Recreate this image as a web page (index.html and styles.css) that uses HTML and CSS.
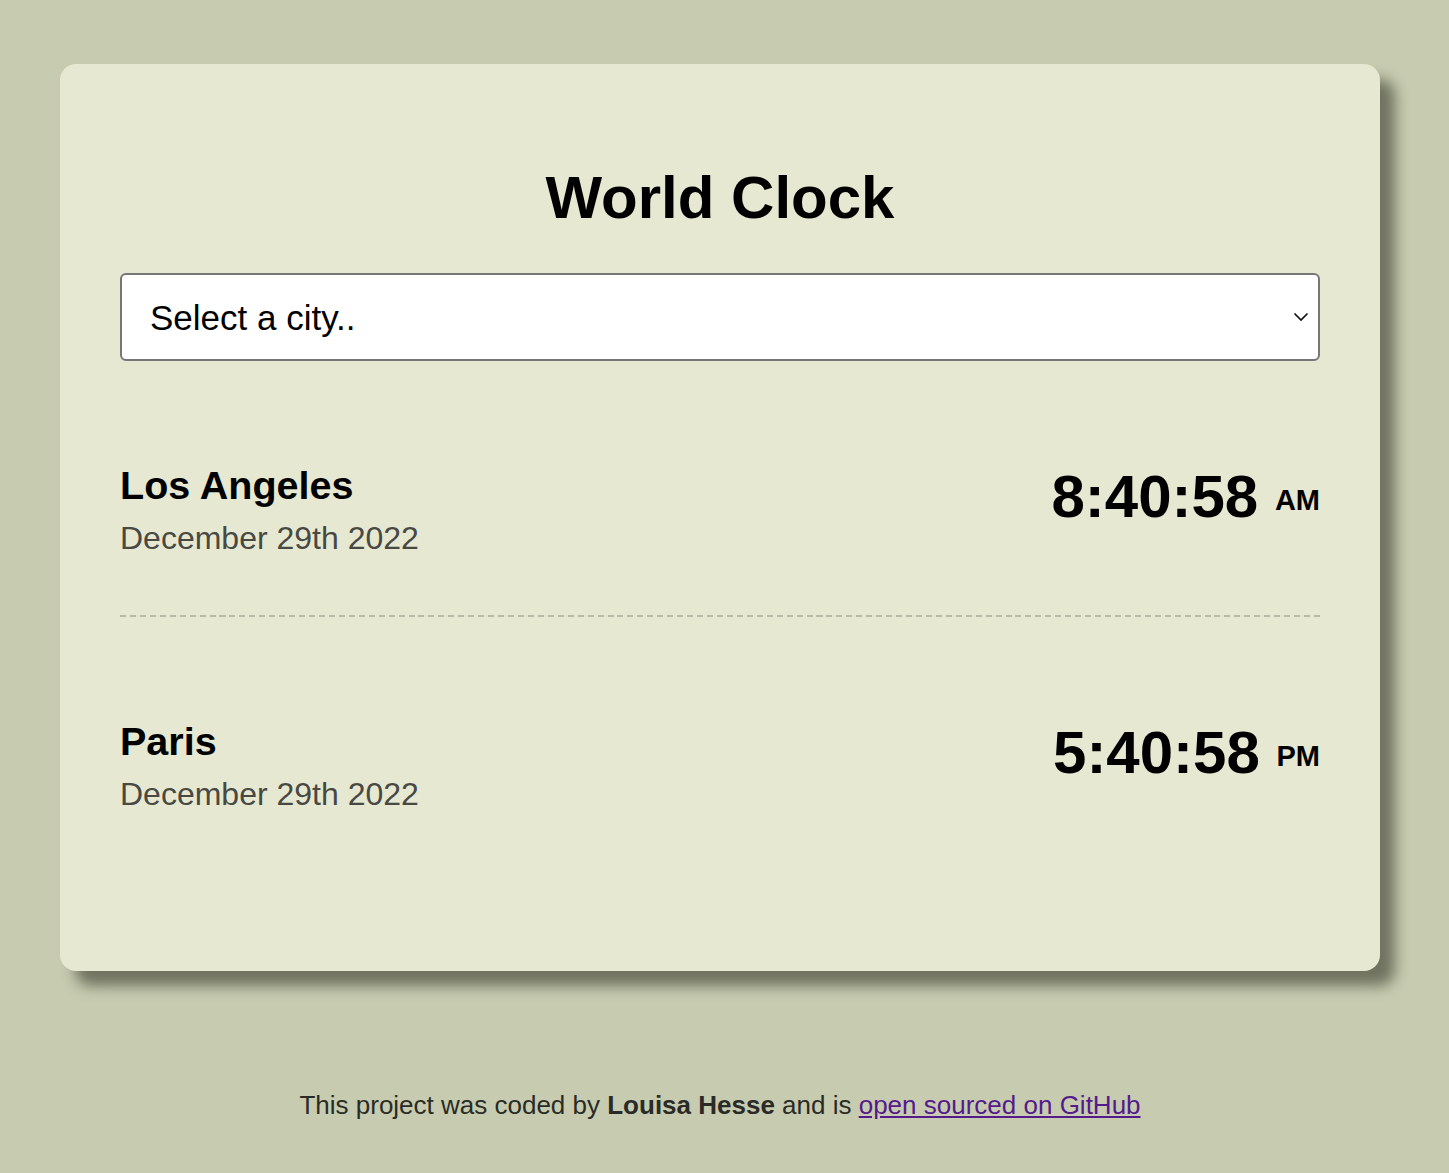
FILE: index.html
```html
<!DOCTYPE html>
<html lang="en">
<head>
<meta charset="utf-8">
<title>World Clock</title>
<link rel="stylesheet" href="styles.css">
</head>
<body>
<div class="container">
  <main class="card">
    <h1 class="title">World Clock</h1>
    <select class="city-select">
      <option>Select a city..</option>
    </select>
    <div class="cities">
      <div class="city">
        <div class="city-info">
          <h2 class="city-name">Los Angeles</h2>
          <div class="city-date">December 29th 2022</div>
        </div>
        <div class="city-time">8:40:58 <small class="ampm">AM</small></div>
      </div>
      <div class="city">
        <div class="city-info">
          <h2 class="city-name">Paris</h2>
          <div class="city-date">December 29th 2022</div>
        </div>
        <div class="city-time">5:40:58 <small class="ampm">PM</small></div>
      </div>
    </div>
  </main>
  <footer class="footer">
    This project was coded by <strong>Louisa Hesse</strong> and is <a class="footer-link" href="#">open sourced on GitHub</a>
  </footer>
</div>
</body>
</html>
```
FILE: styles.css
```css
html, body {
  margin: 0;
  padding: 0;
}
body {
  background: #c7cbb0;
  font-family: "Liberation Sans", Arial, Helvetica, sans-serif;
  color: #000;
}
.container {
  padding: 64px 0 0 60px;
  width: 1320px;
}
.card {
  width: 1320px;
  box-sizing: border-box;
  background: #e7e8d2;
  border-radius: 16px;
  padding: 99px 60px 100px;
  box-shadow: 15px 15px 14px rgba(40, 44, 30, 0.55);
}
.title {
  margin: 0 0 41px;
  font-size: 60px;
  font-weight: 700;
  text-align: center;
  line-height: 69px;
}
.city-select {
  display: block;
  width: 100%;
  height: 88px;
  box-sizing: border-box;
  border: 2px solid #767676;
  border-radius: 6px;
  background-color: #fff;
  background-image: url("data:image/svg+xml,%3Csvg xmlns='http://www.w3.org/2000/svg' width='16' height='10' viewBox='0 0 16 10'%3E%3Cpath d='M1.5 1.5 L8 8 L14.5 1.5' fill='none' stroke='%23111' stroke-width='1.7'/%3E%3C/svg%3E");
  background-repeat: no-repeat;
  background-position: right 9px center;
  appearance: none;
  -webkit-appearance: none;
  padding: 0 40px 0 28px;
  font-family: "Liberation Sans", Arial, Helvetica, sans-serif;
  font-size: 35px;
  color: #000;
}
.city {
  display: flex;
  justify-content: space-between;
  align-items: flex-start;
  padding: 101px 0 58px;
}
.city:not(:last-child) {
  padding-bottom: 58px;
  background-image: repeating-linear-gradient(to right, #b9bba9 0 6px, transparent 6px 9.95px);
  background-size: 100% 2px;
  background-position: left bottom;
  background-repeat: no-repeat;
}
.city:not(:last-child) .city-info,
.city:not(:last-child) .city-time {
  margin-bottom: 2px;
}
.city-name {
  margin: 0 0 12px;
  font-size: 39.5px;
  line-height: 46px;
  font-weight: 700;
}
.city-date {
  font-size: 32px;
  line-height: 37px;
  color: #484943;
}
.city-time {
  font-size: 60px;
  line-height: 69px;
  font-weight: 700;
  white-space: nowrap;
}
.ampm {
  font-size: 29px;
  vertical-align: 7px;
}
.footer {
  margin-top: 119px;
  text-align: center;
  font-size: 26px;
  line-height: 30px;
  color: #2a2b26;
  padding-bottom: 40px;
}
.footer strong {
  font-weight: 700;
}
.footer-link {
  color: #551a8b;
}
```
